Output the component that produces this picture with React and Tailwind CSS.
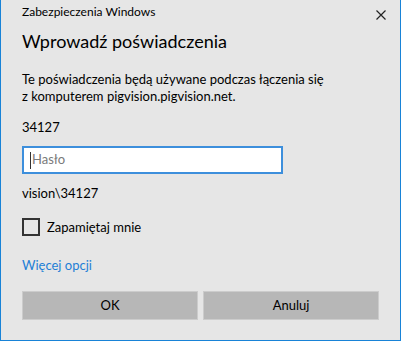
import React from 'react';

const App = () => {
  return (
    <div
      className="w-[401px] h-[341px] bg-[#e6e6e6] border-x border-b border-[#1883d7] flex flex-col text-black"
      style={{ fontFamily: '"Segoe UI", Lato, sans-serif' }}
    >
      {/* title bar */}
      <div className="flex items-start justify-between pl-[21px] pr-[14px] pt-[4px]">
        <span className="text-[12px] leading-[16px]">Zabezpieczenia Windows</span>
        <svg width="10" height="10" viewBox="0 0 10 10" className="mt-[6px] text-[#222]">
          <path d="M0.5 0.5 L9.5 9.5 M9.5 0.5 L0.5 9.5" stroke="currentColor" strokeWidth="1.2" />
        </svg>
      </div>

      <div className="flex flex-col items-start px-[21px]">
        <h1 className="text-[18px] leading-[28px] mt-[7px]">Wprowadź poświadczenia</h1>

        <p className="text-[13px] leading-[17px] mt-[16px]">
          Te poświadczenia będą używane podczas łączenia się
          <br />z komputerem pigvision.pigvision.net.
        </p>

        <div className="text-[13px] leading-[17px] mt-[14px]">34127</div>

        <div className="mt-[10px] w-[261px] h-[28px] bg-white border-2 border-[#3d8fdc] flex items-center pl-[6px]">
          <span className="w-px h-[17px] bg-[#333] mr-[1px]"></span>
          <span className="text-[13px] text-[#7a7a7a]">Hasło</span>
        </div>

        <div className="text-[13px] leading-[17px] mt-[11px]">vision\34127</div>

        <label className="flex items-center gap-[7px] mt-[16px]">
          <span className="w-[18px] h-[18px] border-2 border-[#333] bg-[#e6e6e6]"></span>
          <span className="text-[13px] leading-[17px]">Zapamiętaj mnie</span>
        </label>

        <a className="text-[13px] text-[#1f7fd6] mt-[21px] leading-[17px]">Więcej opcji</a>

        <div className="flex gap-[5px] mt-[17px]">
          <button className="w-[176px] h-[29px] bg-[#b7b7b7] border border-[#cccccc] text-[13px]">OK</button>
          <button className="w-[176px] h-[29px] bg-[#b7b7b7] border border-[#cccccc] text-[13px]">Anuluj</button>
        </div>
      </div>
    </div>
  );
};

export default App;
